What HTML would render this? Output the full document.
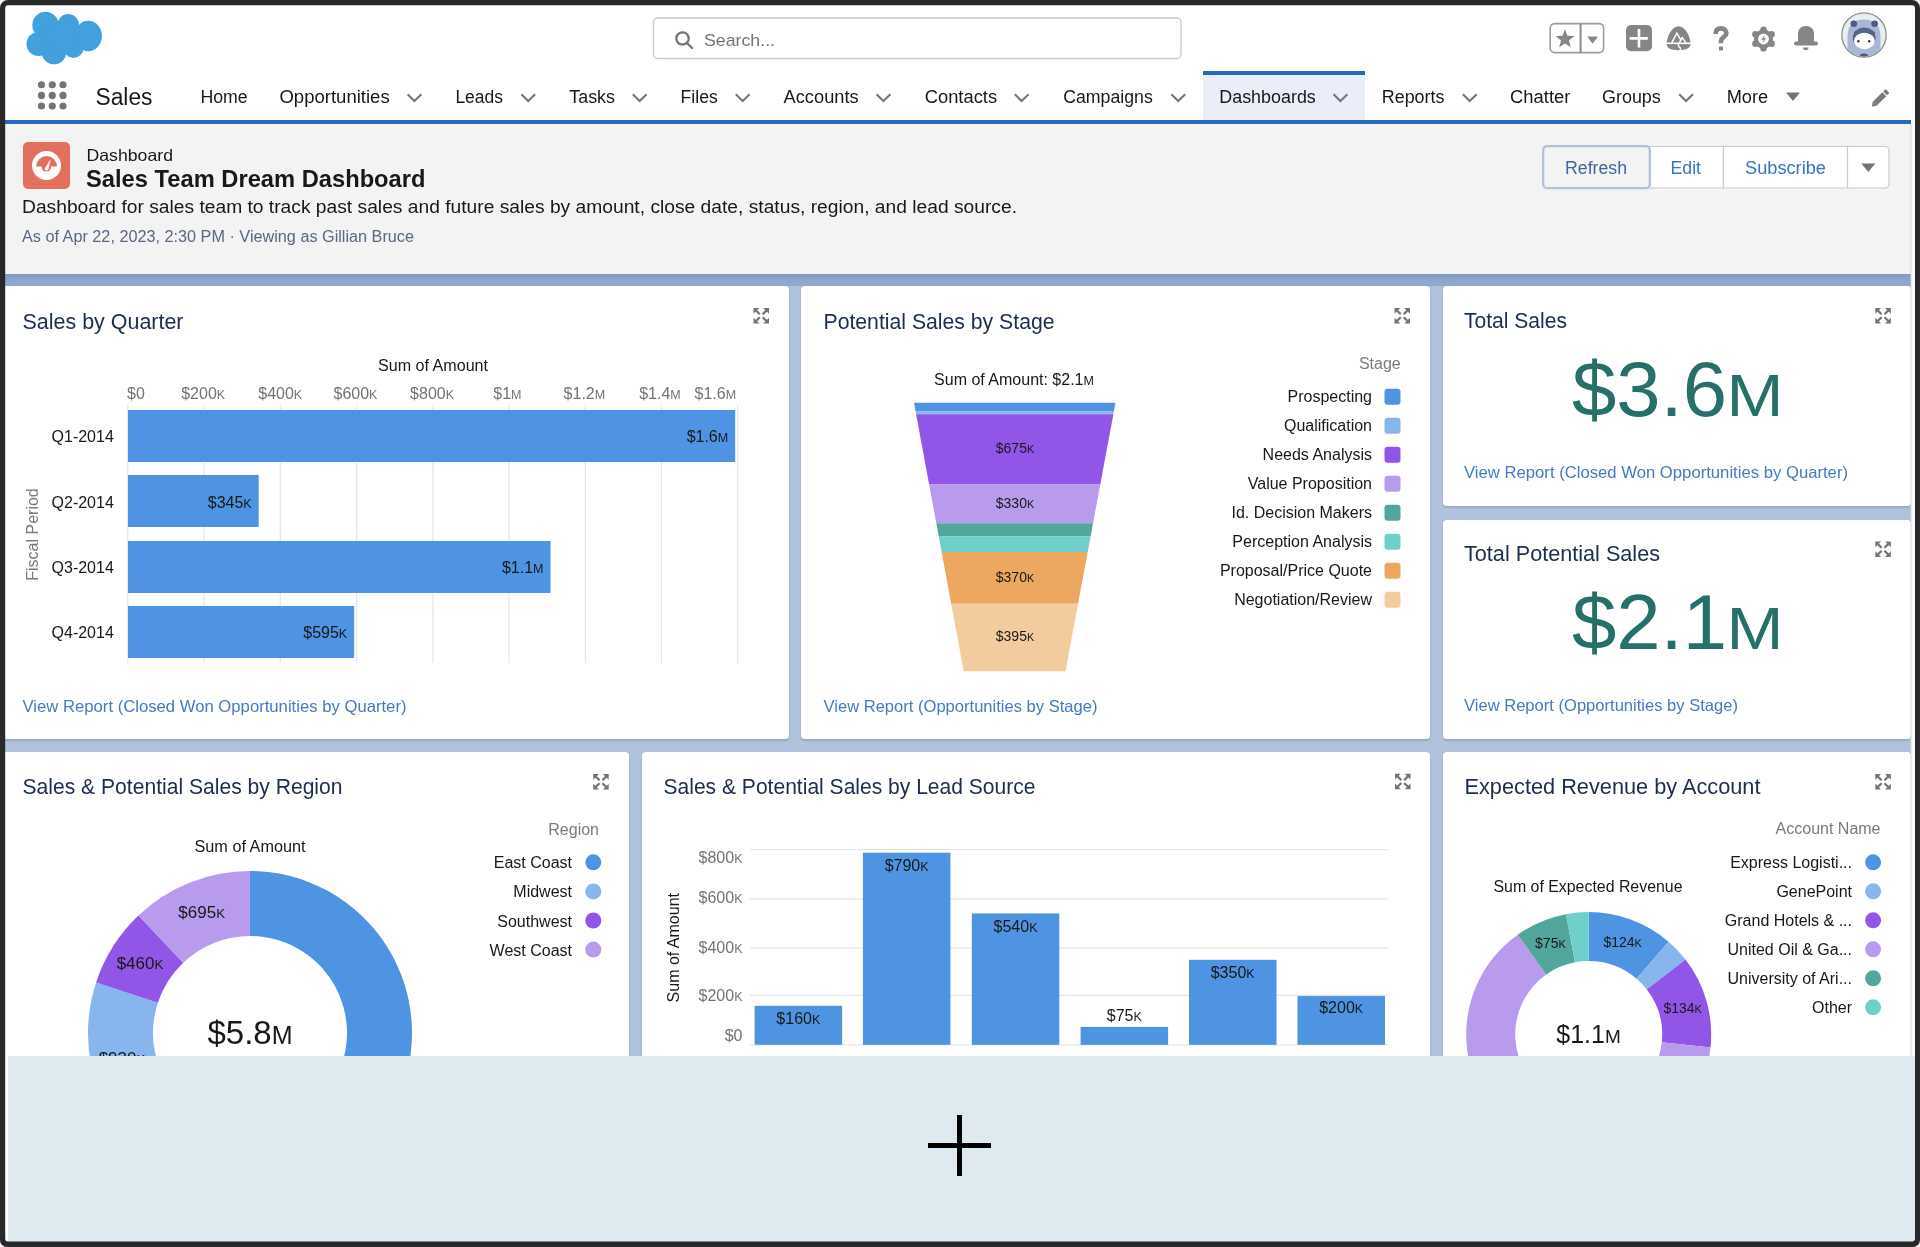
<!DOCTYPE html>
<html><head><meta charset="utf-8"><title>Sales Team Dream Dashboard</title>
<style>html,body{margin:0;padding:0;background:#fff;overflow:hidden}svg{display:block;will-change:transform}text{font-family:"Liberation Sans", sans-serif}</style>
</head><body>
<svg width="1920" height="1247" viewBox="0 0 1920 1247" font-family='"Liberation Sans", sans-serif'>
<rect x="0" y="0" width="1920" height="1247" fill="#ffffff"/>
<rect x="0" y="124" width="1920" height="150" fill="#f3f3f3"/>
<defs><linearGradient id="band" x1="0" y1="0" x2="0" y2="1"><stop offset="0" stop-color="#7d96be"/><stop offset="0.25" stop-color="#8aa2c9"/><stop offset="1" stop-color="#93aad0"/></linearGradient><filter id="sh" x="-5%" y="-5%" width="110%" height="110%"><feDropShadow dx="0" dy="1.5" stdDeviation="1" flood-color="#000" flood-opacity="0.18"/></filter></defs>
<rect x="0" y="274" width="1920" height="12" fill="url(#band)"/>
<rect x="0" y="286" width="1920" height="961" fill="#b1c2dc"/>
<rect x="0" y="0" width="1920" height="120" fill="#ffffff"/>
<rect x="0" y="120" width="1920" height="4" fill="#2a67c1"/>
<rect x="1203" y="75" width="162" height="45" fill="#e9eef8"/>
<rect x="1203" y="71" width="162" height="4" fill="#2a67c1"/>
<rect x="-5" y="286" width="794" height="453" fill="#ffffff" rx="4" filter="url(#sh)"/>
<rect x="801" y="286" width="629" height="453" fill="#ffffff" rx="4" filter="url(#sh)"/>
<rect x="1443" y="286" width="468" height="220" fill="#ffffff" rx="4" filter="url(#sh)"/>
<rect x="1443" y="520" width="468" height="219" fill="#ffffff" rx="4" filter="url(#sh)"/>
<rect x="-5" y="752" width="634" height="400" fill="#ffffff" rx="4" filter="url(#sh)"/>
<rect x="642" y="752" width="788" height="400" fill="#ffffff" rx="4" filter="url(#sh)"/>
<rect x="1443" y="752" width="468" height="400" fill="#ffffff" rx="4" filter="url(#sh)"/>
<g fill="#42a0dd"><circle cx="45.5" cy="25" r="13.2"/><circle cx="68.2" cy="24.8" r="10.8"/><circle cx="38.5" cy="44" r="12"/><circle cx="54" cy="52" r="12.3"/><circle cx="73.5" cy="48" r="10"/><circle cx="62" cy="38" r="16"/><ellipse cx="88.3" cy="36" rx="13.6" ry="15.2"/></g>
<rect x="653.5" y="18" width="527.5" height="40.5" fill="#ffffff" rx="4" stroke="#c9c9c9" stroke-width="1.3"/>
<g stroke="#747474" stroke-width="2.3" fill="none"><circle cx="682.5" cy="38.5" r="6.2"/><path d="M687 43 L692 48" stroke-linecap="round"/></g>
<text x="704" y="45.8" font-size="17" fill="#747474" textLength="71" lengthAdjust="spacingAndGlyphs">Search...</text>
<rect x="1550.2" y="23.6" width="53.4" height="29" fill="#ffffff" rx="4.5" stroke="#9c9c9c" stroke-width="1.6"/>
<line x1="1580.6" y1="23.6" x2="1580.6" y2="52.6" stroke="#8c8c8c" stroke-width="2"/>
<polygon points="1565.00,29.20 1567.47,35.80 1574.51,36.11 1568.99,40.50 1570.88,47.29 1565.00,43.40 1559.12,47.29 1561.01,40.50 1555.49,36.11 1562.53,35.80" fill="#868686"/>
<polygon points="1587.2,36.6 1598.1,36.6 1592.6,43.8" fill="#868686"/>
<rect x="1626" y="25" width="26" height="26.3" fill="#868686" rx="5"/>
<path d="M1639 29 V47.5 M1629.7 38.4 H1647.8" stroke="#fff" stroke-width="2.6"/>
<path d="M1678.6 26.2 C1672 26.2 1666.6 37 1666.6 44 C1666.6 48.5 1672 50.2 1678.6 50.2 C1685.2 50.2 1690.6 48.5 1690.6 44 C1690.6 37 1685.2 26.2 1678.6 26.2 Z" fill="#868686"/>
<path d="M1671.8 42.6 L1676.9 33.2 L1680.6 39.6 M1679.4 42.6 L1682.2 37.6 L1685.8 42.6" stroke="#fff" stroke-width="1.5" fill="none" stroke-linejoin="miter"/><path d="M1666 43.3 H1691" stroke="#fff" stroke-width="1.6"/><path d="M1678.8 43.3 C1677.6 45.5 1678.8 47 1680.4 47.8 L1680.4 51" stroke="#fff" stroke-width="1.4" fill="none"/>
<path d="M1715.6 34 C1715.6 29.6 1718 28.4 1721 28.4 C1724.2 28.4 1726.4 30.4 1726.4 33.2 C1726.4 36.4 1721 37.4 1721 41 V43.2" stroke="#868686" stroke-width="4.6" fill="none"/>
<rect x="1719" y="46.6" width="4" height="4" fill="#868686" rx="0.5"/>
<g fill="#868686"><circle cx="1763.50" cy="29.60" r="3.2"/><circle cx="1771.64" cy="34.30" r="3.2"/><circle cx="1771.64" cy="43.70" r="3.2"/><circle cx="1763.50" cy="48.40" r="3.2"/><circle cx="1755.36" cy="43.70" r="3.2"/><circle cx="1755.36" cy="34.30" r="3.2"/><circle cx="1763.5" cy="39" r="9.6"/></g>
<circle cx="1763.5" cy="39" r="5.4" fill="#fff"/><path d="M1765 34.6 L1761.2 39.8 H1763.6 L1762 43.6 L1766.2 38.2 H1763.6 Z" fill="#868686"/>
<path d="M1798 42 V34 C1798 29 1801.4 26 1806 26 C1810.6 26 1814 29 1814 34 V42 Z" fill="#868686"/><rect x="1794" y="41.6" width="24" height="4" rx="2" fill="#868686"/><path d="M1803 47.5 H1808.5 A2.75 2.75 0 0 1 1803 47.5 Z" fill="#868686"/>
<circle cx="1864" cy="35" r="22.2" fill="#e9eef0" stroke="#8e8e8e" stroke-width="1.3"/>
<defs><clipPath id="av"><circle cx="1864" cy="35" r="21.5"/></clipPath></defs>
<g clip-path="url(#av)"><path d="M1847.5 60 V36 C1847.5 25 1854 19.5 1864 19.5 C1874 19.5 1880.5 25 1880.5 36 V60 Z" fill="#a9b7d4"/><circle cx="1853.8" cy="23.8" r="3.3" fill="#4b5b81"/><circle cx="1874.6" cy="23.8" r="3.3" fill="#4b5b81"/><ellipse cx="1864.2" cy="38" rx="11.4" ry="10.5" fill="#55648a"/><ellipse cx="1864.4" cy="41" rx="10.4" ry="8.2" fill="#ffffff"/><path d="M1854 36 C1857 33 1862 34 1864 31.5 C1866 34 1872 33 1875 36.5 L1875 32 C1870 28 1858 28 1854 32 Z" fill="#55648a"/><circle cx="1858.4" cy="41.2" r="1.2" fill="#333"/><circle cx="1869.2" cy="41.2" r="1.2" fill="#333"/><ellipse cx="1864" cy="57" rx="4.5" ry="3.5" fill="#4b5b81"/></g>
<circle cx="41.5" cy="84.75" r="3.6" fill="#747474"/>
<circle cx="41.5" cy="95.4" r="3.6" fill="#747474"/>
<circle cx="41.5" cy="106" r="3.6" fill="#747474"/>
<circle cx="52.25" cy="84.75" r="3.6" fill="#747474"/>
<circle cx="52.25" cy="95.4" r="3.6" fill="#747474"/>
<circle cx="52.25" cy="106" r="3.6" fill="#747474"/>
<circle cx="63" cy="84.75" r="3.6" fill="#747474"/>
<circle cx="63" cy="95.4" r="3.6" fill="#747474"/>
<circle cx="63" cy="106" r="3.6" fill="#747474"/>
<text x="95.5" y="104.75" font-size="23" fill="#181818" textLength="57" lengthAdjust="spacingAndGlyphs">Sales</text>
<text x="200.45" y="102.7" font-size="17.5" fill="#181818" textLength="47.3" lengthAdjust="spacingAndGlyphs">Home</text>
<text x="279.4" y="102.7" font-size="17.5" fill="#181818" textLength="110.3" lengthAdjust="spacingAndGlyphs">Opportunities</text>
<text x="455.4" y="102.7" font-size="17.5" fill="#181818" textLength="47.6" lengthAdjust="spacingAndGlyphs">Leads</text>
<text x="569.3000000000001" y="102.7" font-size="17.5" fill="#181818" textLength="45.7" lengthAdjust="spacingAndGlyphs">Tasks</text>
<text x="680.6" y="102.7" font-size="17.5" fill="#181818" textLength="37.2" lengthAdjust="spacingAndGlyphs">Files</text>
<text x="783.6" y="102.7" font-size="17.5" fill="#181818" textLength="75.0" lengthAdjust="spacingAndGlyphs">Accounts</text>
<text x="924.7" y="102.7" font-size="17.5" fill="#181818" textLength="72.4" lengthAdjust="spacingAndGlyphs">Contacts</text>
<text x="1063.2" y="102.7" font-size="17.5" fill="#181818" textLength="89.6" lengthAdjust="spacingAndGlyphs">Campaigns</text>
<text x="1219.3" y="102.7" font-size="17.5" fill="#181818" textLength="96.5" lengthAdjust="spacingAndGlyphs">Dashboards</text>
<text x="1381.8" y="102.7" font-size="17.5" fill="#181818" textLength="62.6" lengthAdjust="spacingAndGlyphs">Reports</text>
<text x="1510.1000000000001" y="102.7" font-size="17.5" fill="#181818" textLength="60.3" lengthAdjust="spacingAndGlyphs">Chatter</text>
<text x="1602.0" y="102.7" font-size="17.5" fill="#181818" textLength="58.8" lengthAdjust="spacingAndGlyphs">Groups</text>
<text x="1726.7" y="102.7" font-size="17.5" fill="#181818" textLength="41.4" lengthAdjust="spacingAndGlyphs">More</text>
<path d="M407.6 94.3 L414.40000000000003 101 L421.40000000000003 94.3" stroke="#747474" stroke-width="2" fill="none"/>
<path d="M521.4 94.3 L528.2 101 L535.2 94.3" stroke="#747474" stroke-width="2" fill="none"/>
<path d="M632.8 94.3 L639.6 101 L646.6 94.3" stroke="#747474" stroke-width="2" fill="none"/>
<path d="M735.8 94.3 L742.6 101 L749.6 94.3" stroke="#747474" stroke-width="2" fill="none"/>
<path d="M876.5999999999999 94.3 L883.4 101 L890.4 94.3" stroke="#747474" stroke-width="2" fill="none"/>
<path d="M1014.8 94.3 L1021.6 101 L1028.6 94.3" stroke="#747474" stroke-width="2" fill="none"/>
<path d="M1171.3999999999999 94.3 L1178.1999999999998 101 L1185.1999999999998 94.3" stroke="#747474" stroke-width="2" fill="none"/>
<path d="M1333.6 94.3 L1340.3999999999999 101 L1347.3999999999999 94.3" stroke="#747474" stroke-width="2" fill="none"/>
<path d="M1462.8999999999999 94.3 L1469.6999999999998 101 L1476.6999999999998 94.3" stroke="#747474" stroke-width="2" fill="none"/>
<path d="M1679.2 94.3 L1686.0 101 L1693.0 94.3" stroke="#747474" stroke-width="2" fill="none"/>
<polygon points="1786,92.5 1800,92.5 1793,101" fill="#747474"/>
<g transform="rotate(-45 1879.8 98.7)"><rect x="1872.3" y="96" width="13.8" height="5.4" fill="#7a7a7a"/><polygon points="1868.6,98.7 1872.3,96 1872.3,101.4" fill="#7a7a7a"/><rect x="1887.2" y="96" width="3.6" height="5.4" rx="1.2" fill="#7a7a7a"/></g>
<rect x="23" y="142" width="47" height="47" fill="#e3705f" rx="5"/>
<circle cx="46.5" cy="165.5" r="14.5" fill="#fff"/>
<path d="M36.2 166.5 A10.4 10.4 0 0 1 57 166.5 Z" fill="#e3705f"/><circle cx="46.3" cy="166.8" r="4.8" fill="#e3705f"/>
<path d="M44.6 168.6 L50.8 159 L48.3 169.6 A2 2 0 0 1 44.6 168.6 Z" fill="#fff"/>
<text x="86.5" y="160.6" font-size="16.5" fill="#181818" textLength="86.5" lengthAdjust="spacingAndGlyphs">Dashboard</text>
<text x="86" y="186.9" font-size="24" fill="#181818" font-weight="bold" textLength="339.5" lengthAdjust="spacingAndGlyphs">Sales Team Dream Dashboard</text>
<text x="22" y="212.6" font-size="17.5" fill="#181818" textLength="995" lengthAdjust="spacingAndGlyphs">Dashboard for sales team to track past sales and future sales by amount, close date, status, region, and lead source.</text>
<text x="22" y="241.8" font-size="16" fill="#586884" textLength="392" lengthAdjust="spacingAndGlyphs">As of Apr 22, 2023, 2:30 PM · Viewing as Gillian Bruce</text>
<rect x="1543" y="146.5" width="346" height="41.5" fill="#ffffff" rx="4" stroke="#c9c9c9" stroke-width="1.2"/>
<rect x="1543.2" y="146.2" width="106.6" height="42" fill="#f3f3f3" rx="4" stroke="#b2c0d8" stroke-width="2.2"/>
<line x1="1723.3" y1="146.5" x2="1723.3" y2="188" stroke="#c9c9c9" stroke-width="1.2"/>
<line x1="1847.5" y1="146.5" x2="1847.5" y2="188" stroke="#c9c9c9" stroke-width="1.2"/>
<text x="1565" y="174.25" font-size="17.5" fill="#45669c" textLength="62" lengthAdjust="spacingAndGlyphs">Refresh</text>
<text x="1670.5" y="174.25" font-size="17.5" fill="#3475c8" textLength="30.5" lengthAdjust="spacingAndGlyphs">Edit</text>
<text x="1745" y="174.25" font-size="17.5" fill="#3475c8" textLength="81" lengthAdjust="spacingAndGlyphs">Subscribe</text>
<polygon points="1861.3,163.5 1875.3,163.5 1868.3,172" fill="#747474"/>
<text x="22.5" y="328.5" font-size="21.5" fill="#1b2d50" textLength="161" lengthAdjust="spacingAndGlyphs">Sales by Quarter</text>
<polygon points="753.5,308.0 759.3,308.0 753.5,313.8" fill="#747474"/><line x1="756.0" y1="310.5" x2="759.8" y2="314.3" stroke="#747474" stroke-width="2.3"/><polygon points="769.0,308.0 763.2,308.0 769.0,313.8" fill="#747474"/><line x1="766.5" y1="310.5" x2="762.7" y2="314.3" stroke="#747474" stroke-width="2.3"/><polygon points="753.5,323.5 759.3,323.5 753.5,317.7" fill="#747474"/><line x1="756.0" y1="321.0" x2="759.8" y2="317.2" stroke="#747474" stroke-width="2.3"/><polygon points="769.0,323.5 763.2,323.5 769.0,317.7" fill="#747474"/><line x1="766.5" y1="321.0" x2="762.7" y2="317.2" stroke="#747474" stroke-width="2.3"/>
<text x="433" y="371" font-size="16" fill="#181818" text-anchor="middle" textLength="110" lengthAdjust="spacingAndGlyphs">Sum of Amount</text>
<line x1="127.8" y1="405" x2="127.8" y2="663" stroke="#e5e5e5" stroke-width="1.2"/>
<line x1="204.1" y1="405" x2="204.1" y2="663" stroke="#e5e5e5" stroke-width="1.2"/>
<line x1="280.3" y1="405" x2="280.3" y2="663" stroke="#e5e5e5" stroke-width="1.2"/>
<line x1="356.6" y1="405" x2="356.6" y2="663" stroke="#e5e5e5" stroke-width="1.2"/>
<line x1="432.8" y1="405" x2="432.8" y2="663" stroke="#e5e5e5" stroke-width="1.2"/>
<line x1="509.1" y1="405" x2="509.1" y2="663" stroke="#e5e5e5" stroke-width="1.2"/>
<line x1="585.3" y1="405" x2="585.3" y2="663" stroke="#e5e5e5" stroke-width="1.2"/>
<line x1="661.5" y1="405" x2="661.5" y2="663" stroke="#e5e5e5" stroke-width="1.2"/>
<line x1="737.8" y1="405" x2="737.8" y2="663" stroke="#e5e5e5" stroke-width="1.2"/>
<text x="127.0" y="398.8" font-size="16" fill="#737373">$0</text>
<text x="181.2" y="398.8" font-size="16" fill="#737373">$200<tspan font-size="12.5">K</tspan></text>
<text x="258.25" y="398.8" font-size="16" fill="#737373">$400<tspan font-size="12.5">K</tspan></text>
<text x="333.5" y="398.8" font-size="16" fill="#737373">$600<tspan font-size="12.5">K</tspan></text>
<text x="410.1" y="398.8" font-size="16" fill="#737373">$800<tspan font-size="12.5">K</tspan></text>
<text x="493.3" y="398.8" font-size="16" fill="#737373">$1<tspan font-size="12.5">M</tspan></text>
<text x="563.6" y="398.8" font-size="16" fill="#737373">$1.2<tspan font-size="12.5">M</tspan></text>
<text x="639.2" y="398.8" font-size="16" fill="#737373">$1.4<tspan font-size="12.5">M</tspan></text>
<text x="694.5" y="398.8" font-size="16" fill="#737373">$1.6<tspan font-size="12.5">M</tspan></text>
<rect x="128" y="410" width="607.2" height="52" fill="#4f94e2"/>
<text x="113.8" y="441.5" font-size="16" fill="#181818" text-anchor="end">Q1-2014</text>
<text x="728.2" y="441.5" font-size="16" fill="#181818" text-anchor="end">$1.6<tspan font-size="12.5">M</tspan></text>
<rect x="128" y="475" width="130.7" height="52" fill="#4f94e2"/>
<text x="113.8" y="508.2" font-size="16" fill="#181818" text-anchor="end">Q2-2014</text>
<text x="251.7" y="508.2" font-size="16" fill="#181818" text-anchor="end">$345<tspan font-size="12.5">K</tspan></text>
<rect x="128" y="541" width="422.5" height="52" fill="#4f94e2"/>
<text x="113.8" y="572.9" font-size="16" fill="#181818" text-anchor="end">Q3-2014</text>
<text x="543.5" y="572.9" font-size="16" fill="#181818" text-anchor="end">$1.1<tspan font-size="12.5">M</tspan></text>
<rect x="128" y="606" width="226.2" height="52" fill="#4f94e2"/>
<text x="113.8" y="638.4" font-size="16" fill="#181818" text-anchor="end">Q4-2014</text>
<text x="347.2" y="638.4" font-size="16" fill="#181818" text-anchor="end">$595<tspan font-size="12.5">K</tspan></text>
<text x="0" y="0" font-size="16" fill="#7a7a7a" text-anchor="middle" transform="translate(37.6 534.5) rotate(-90)">Fiscal Period</text>
<text x="22.5" y="711.9" font-size="16.5" fill="#447ac4" textLength="384" lengthAdjust="spacingAndGlyphs">View Report (Closed Won Opportunities by Quarter)</text>
<text x="823.5" y="329.4" font-size="21.5" fill="#1b2d50" textLength="231" lengthAdjust="spacingAndGlyphs">Potential Sales by Stage</text>
<polygon points="1394.5,308.0 1400.3,308.0 1394.5,313.8" fill="#747474"/><line x1="1397.0" y1="310.5" x2="1400.8" y2="314.3" stroke="#747474" stroke-width="2.3"/><polygon points="1410.0,308.0 1404.2,308.0 1410.0,313.8" fill="#747474"/><line x1="1407.5" y1="310.5" x2="1403.7" y2="314.3" stroke="#747474" stroke-width="2.3"/><polygon points="1394.5,323.5 1400.3,323.5 1394.5,317.7" fill="#747474"/><line x1="1397.0" y1="321.0" x2="1400.8" y2="317.2" stroke="#747474" stroke-width="2.3"/><polygon points="1410.0,323.5 1404.2,323.5 1410.0,317.7" fill="#747474"/><line x1="1407.5" y1="321.0" x2="1403.7" y2="317.2" stroke="#747474" stroke-width="2.3"/>
<text x="1014" y="385.3" font-size="16" fill="#181818" text-anchor="middle">Sum of Amount: $2.1<tspan font-size="12.5">M</tspan></text>
<polygon points="914.00,402.7 1115.50,402.7 1113.84,411.6 915.65,411.6" fill="#4f94e2"/>
<polygon points="915.65,411.6 1113.84,411.6 1113.36,414.2 916.13,414.2" fill="#88b5ed"/>
<polygon points="916.13,414.2 1113.36,414.2 1100.27,484.5 929.14,484.5" fill="#9155e8"/>
<polygon points="929.14,484.5 1100.27,484.5 1093.04,523.3 936.32,523.3" fill="#b99bee"/>
<polygon points="936.32,523.3 1093.04,523.3 1090.58,536.5 938.77,536.5" fill="#52a69c"/>
<polygon points="938.77,536.5 1090.58,536.5 1087.72,551.9 941.62,551.9" fill="#6fcfca"/>
<polygon points="941.62,551.9 1087.72,551.9 1078.05,603.8 951.22,603.8" fill="#eca760"/>
<polygon points="951.22,603.8 1078.05,603.8 1065.50,671.2 963.70,671.2" fill="#f2cc9f"/>
<text x="1015" y="453.3" font-size="14" fill="#181818" text-anchor="middle">$675<tspan font-size="10.9">K</tspan></text>
<text x="1015" y="507.5" font-size="14" fill="#181818" text-anchor="middle">$330<tspan font-size="10.9">K</tspan></text>
<text x="1015" y="581.5" font-size="14" fill="#181818" text-anchor="middle">$370<tspan font-size="10.9">K</tspan></text>
<text x="1015" y="640.6" font-size="14" fill="#181818" text-anchor="middle">$395<tspan font-size="10.9">K</tspan></text>
<text x="1400.7" y="369.2" font-size="16" fill="#7a7a7a" text-anchor="end">Stage</text>
<text x="1372" y="402.3" font-size="16" fill="#181818" text-anchor="end">Prospecting</text>
<rect x="1384.5" y="388.7" width="16" height="16" fill="#4f94e2" rx="3"/>
<text x="1372" y="431.29" font-size="16" fill="#181818" text-anchor="end">Qualification</text>
<rect x="1384.5" y="417.69" width="16" height="16" fill="#88b5ed" rx="3"/>
<text x="1372" y="460.28000000000003" font-size="16" fill="#181818" text-anchor="end">Needs Analysis</text>
<rect x="1384.5" y="446.68" width="16" height="16" fill="#9155e8" rx="3"/>
<text x="1372" y="489.27" font-size="16" fill="#181818" text-anchor="end">Value Proposition</text>
<rect x="1384.5" y="475.66999999999996" width="16" height="16" fill="#b99bee" rx="3"/>
<text x="1372" y="518.26" font-size="16" fill="#181818" text-anchor="end">Id. Decision Makers</text>
<rect x="1384.5" y="504.65999999999997" width="16" height="16" fill="#52a69c" rx="3"/>
<text x="1372" y="547.25" font-size="16" fill="#181818" text-anchor="end">Perception Analysis</text>
<rect x="1384.5" y="533.65" width="16" height="16" fill="#6fcfca" rx="3"/>
<text x="1372" y="576.24" font-size="16" fill="#181818" text-anchor="end">Proposal/Price Quote</text>
<rect x="1384.5" y="562.64" width="16" height="16" fill="#eca760" rx="3"/>
<text x="1372" y="605.23" font-size="16" fill="#181818" text-anchor="end">Negotiation/Review</text>
<rect x="1384.5" y="591.63" width="16" height="16" fill="#f2cc9f" rx="3"/>
<text x="823.5" y="711.9" font-size="16.5" fill="#447ac4" textLength="274" lengthAdjust="spacingAndGlyphs">View Report (Opportunities by Stage)</text>
<text x="1464" y="328" font-size="21.5" fill="#1b2d50" textLength="103" lengthAdjust="spacingAndGlyphs">Total Sales</text>
<polygon points="1875.3,308.0 1881.1,308.0 1875.3,313.8" fill="#747474"/><line x1="1877.8" y1="310.5" x2="1881.6" y2="314.3" stroke="#747474" stroke-width="2.3"/><polygon points="1890.8,308.0 1885.0,308.0 1890.8,313.8" fill="#747474"/><line x1="1888.3" y1="310.5" x2="1884.5" y2="314.3" stroke="#747474" stroke-width="2.3"/><polygon points="1875.3,323.5 1881.1,323.5 1875.3,317.7" fill="#747474"/><line x1="1877.8" y1="321.0" x2="1881.6" y2="317.2" stroke="#747474" stroke-width="2.3"/><polygon points="1890.8,323.5 1885.0,323.5 1890.8,317.7" fill="#747474"/><line x1="1888.3" y1="321.0" x2="1884.5" y2="317.2" stroke="#747474" stroke-width="2.3"/>
<text x="1572" y="416.3" font-size="78" fill="#27706a" textLength="155" lengthAdjust="spacingAndGlyphs">$3.6</text>
<text x="1726.5" y="416.3" font-size="60" fill="#27706a" textLength="57" lengthAdjust="spacingAndGlyphs">M</text>
<text x="1464" y="477.8" font-size="16.5" fill="#447ac4" textLength="384" lengthAdjust="spacingAndGlyphs">View Report (Closed Won Opportunities by Quarter)</text>
<text x="1464" y="561.25" font-size="21.5" fill="#1b2d50" textLength="196" lengthAdjust="spacingAndGlyphs">Total Potential Sales</text>
<polygon points="1875.3,541.5 1881.1,541.5 1875.3,547.3" fill="#747474"/><line x1="1877.8" y1="544.0" x2="1881.6" y2="547.8" stroke="#747474" stroke-width="2.3"/><polygon points="1890.8,541.5 1885.0,541.5 1890.8,547.3" fill="#747474"/><line x1="1888.3" y1="544.0" x2="1884.5" y2="547.8" stroke="#747474" stroke-width="2.3"/><polygon points="1875.3,557.0 1881.1,557.0 1875.3,551.2" fill="#747474"/><line x1="1877.8" y1="554.5" x2="1881.6" y2="550.7" stroke="#747474" stroke-width="2.3"/><polygon points="1890.8,557.0 1885.0,557.0 1890.8,551.2" fill="#747474"/><line x1="1888.3" y1="554.5" x2="1884.5" y2="550.7" stroke="#747474" stroke-width="2.3"/>
<text x="1572" y="649.1" font-size="78" fill="#27706a" textLength="155" lengthAdjust="spacingAndGlyphs">$2.1</text>
<text x="1726.5" y="649.1" font-size="60" fill="#27706a" textLength="57" lengthAdjust="spacingAndGlyphs">M</text>
<text x="1464" y="711.3" font-size="16.5" fill="#447ac4" textLength="274" lengthAdjust="spacingAndGlyphs">View Report (Opportunities by Stage)</text>
<text x="22.5" y="794.3" font-size="21.5" fill="#1b2d50" textLength="320" lengthAdjust="spacingAndGlyphs">Sales &amp; Potential Sales by Region</text>
<polygon points="593.2,774.0 599.0,774.0 593.2,779.8" fill="#747474"/><line x1="595.7" y1="776.5" x2="599.5" y2="780.3" stroke="#747474" stroke-width="2.3"/><polygon points="608.7,774.0 602.9000000000001,774.0 608.7,779.8" fill="#747474"/><line x1="606.2" y1="776.5" x2="602.4000000000001" y2="780.3" stroke="#747474" stroke-width="2.3"/><polygon points="593.2,789.5 599.0,789.5 593.2,783.7" fill="#747474"/><line x1="595.7" y1="787.0" x2="599.5" y2="783.2" stroke="#747474" stroke-width="2.3"/><polygon points="608.7,789.5 602.9000000000001,789.5 608.7,783.7" fill="#747474"/><line x1="606.2" y1="787.0" x2="602.4000000000001" y2="783.2" stroke="#747474" stroke-width="2.3"/>
<text x="599" y="835" font-size="16" fill="#7a7a7a" text-anchor="end">Region</text>
<text x="572" y="868.3" font-size="16" fill="#181818" text-anchor="end">East Coast</text>
<circle cx="593.3" cy="862.3" r="8" fill="#4f94e2"/>
<text x="572" y="897.4" font-size="16" fill="#181818" text-anchor="end">Midwest</text>
<circle cx="593.3" cy="891.4" r="8" fill="#88b5ed"/>
<text x="572" y="926.5" font-size="16" fill="#181818" text-anchor="end">Southwest</text>
<circle cx="593.3" cy="920.5" r="8" fill="#9155e8"/>
<text x="572" y="955.5999999999999" font-size="16" fill="#181818" text-anchor="end">West Coast</text>
<circle cx="593.3" cy="949.6" r="8" fill="#b99bee"/>
<text x="250" y="851.7" font-size="16" fill="#181818" text-anchor="middle" textLength="111" lengthAdjust="spacingAndGlyphs">Sum of Amount</text>
<path d="M250.00 871.00 A162 162 0 1 1 124.82 1135.83 L175.04 1094.57 A97 97 0 1 0 250.00 936.00 Z" fill="#4f94e2"/>
<path d="M124.82 1135.83 A162 162 0 0 1 96.10 982.40 L157.85 1002.70 A97 97 0 0 0 175.04 1094.57 Z" fill="#88b5ed"/>
<path d="M96.10 982.40 A162 162 0 0 1 138.49 915.49 L183.23 962.64 A97 97 0 0 0 157.85 1002.70 Z" fill="#9155e8"/>
<path d="M138.49 915.49 A162 162 0 0 1 250.00 871.00 L250.00 936.00 A97 97 0 0 0 183.23 962.64 Z" fill="#b99bee"/>
<text x="201.7" y="917.7" font-size="17" fill="#181818" text-anchor="middle">$695<tspan font-size="13.3">K</tspan></text>
<text x="140" y="969.3" font-size="17" fill="#181818" text-anchor="middle">$460<tspan font-size="13.3">K</tspan></text>
<text x="122" y="1064" font-size="17" fill="#181818" text-anchor="middle">$930<tspan font-size="13.3">K</tspan></text>
<text x="250" y="1044" font-size="33" fill="#181818" text-anchor="middle">$5.8<tspan font-size="25">M</tspan></text>
<text x="663.5" y="794" font-size="21.5" fill="#1b2d50" textLength="372" lengthAdjust="spacingAndGlyphs">Sales &amp; Potential Sales by Lead Source</text>
<polygon points="1395.0,773.8 1400.8,773.8 1395.0,779.5999999999999" fill="#747474"/><line x1="1397.5" y1="776.3" x2="1401.3" y2="780.0999999999999" stroke="#747474" stroke-width="2.3"/><polygon points="1410.5,773.8 1404.7,773.8 1410.5,779.5999999999999" fill="#747474"/><line x1="1408.0" y1="776.3" x2="1404.2" y2="780.0999999999999" stroke="#747474" stroke-width="2.3"/><polygon points="1395.0,789.3 1400.8,789.3 1395.0,783.5" fill="#747474"/><line x1="1397.5" y1="786.8" x2="1401.3" y2="783.0" stroke="#747474" stroke-width="2.3"/><polygon points="1410.5,789.3 1404.7,789.3 1410.5,783.5" fill="#747474"/><line x1="1408.0" y1="786.8" x2="1404.2" y2="783.0" stroke="#747474" stroke-width="2.3"/>
<line x1="750" y1="849.6" x2="1388" y2="849.6" stroke="#e5e5e5" stroke-width="1.3"/>
<line x1="750" y1="898.9" x2="1388" y2="898.9" stroke="#e5e5e5" stroke-width="1.3"/>
<line x1="750" y1="947.8" x2="1388" y2="947.8" stroke="#e5e5e5" stroke-width="1.3"/>
<line x1="750" y1="995.3" x2="1388" y2="995.3" stroke="#e5e5e5" stroke-width="1.3"/>
<line x1="750" y1="1044.8" x2="1388" y2="1044.8" stroke="#e5e5e5" stroke-width="1.3"/>
<text x="742.5" y="862.6" font-size="16" fill="#737373" text-anchor="end">$800<tspan font-size="12.5">K</tspan></text>
<text x="742.5" y="903.4" font-size="16" fill="#737373" text-anchor="end">$600<tspan font-size="12.5">K</tspan></text>
<text x="742.5" y="952.9" font-size="16" fill="#737373" text-anchor="end">$400<tspan font-size="12.5">K</tspan></text>
<text x="742.5" y="1001.3" font-size="16" fill="#737373" text-anchor="end">$200<tspan font-size="12.5">K</tspan></text>
<text x="742.5" y="1041.1" font-size="16" fill="#737373" text-anchor="end">$0</text>
<text x="0" y="0" font-size="16" fill="#181818" text-anchor="middle" transform="translate(678.5 947.7) rotate(-90)">Sum of Amount</text>
<rect x="754.6" y="1005.8" width="87.5" height="39.0" fill="#4f94e2"/>
<text x="798.3000000000001" y="1023.9" font-size="16" fill="#181818" text-anchor="middle">$160<tspan font-size="12.5">K</tspan></text>
<rect x="862.9" y="852.7" width="87.5" height="192.0999999999999" fill="#4f94e2"/>
<text x="906.6" y="870.8" font-size="16" fill="#181818" text-anchor="middle">$790<tspan font-size="12.5">K</tspan></text>
<rect x="971.8" y="913.4" width="87.5" height="131.39999999999998" fill="#4f94e2"/>
<text x="1015.5" y="932" font-size="16" fill="#181818" text-anchor="middle">$540<tspan font-size="12.5">K</tspan></text>
<rect x="1080.6" y="1026.9" width="87.5" height="17.899999999999864" fill="#4f94e2"/>
<text x="1124.3" y="1020.6" font-size="16" fill="#181818" text-anchor="middle">$75<tspan font-size="12.5">K</tspan></text>
<rect x="1189" y="959.8" width="87.5" height="85.0" fill="#4f94e2"/>
<text x="1232.7" y="977.5" font-size="16" fill="#181818" text-anchor="middle">$350<tspan font-size="12.5">K</tspan></text>
<rect x="1297.5" y="996.1" width="87.5" height="48.69999999999993" fill="#4f94e2"/>
<text x="1341.2" y="1013.4" font-size="16" fill="#181818" text-anchor="middle">$200<tspan font-size="12.5">K</tspan></text>
<text x="1464.5" y="794.2" font-size="21.5" fill="#1b2d50" textLength="296" lengthAdjust="spacingAndGlyphs">Expected Revenue by Account</text>
<polygon points="1875.3,774.0 1881.1,774.0 1875.3,779.8" fill="#747474"/><line x1="1877.8" y1="776.5" x2="1881.6" y2="780.3" stroke="#747474" stroke-width="2.3"/><polygon points="1890.8,774.0 1885.0,774.0 1890.8,779.8" fill="#747474"/><line x1="1888.3" y1="776.5" x2="1884.5" y2="780.3" stroke="#747474" stroke-width="2.3"/><polygon points="1875.3,789.5 1881.1,789.5 1875.3,783.7" fill="#747474"/><line x1="1877.8" y1="787.0" x2="1881.6" y2="783.2" stroke="#747474" stroke-width="2.3"/><polygon points="1890.8,789.5 1885.0,789.5 1890.8,783.7" fill="#747474"/><line x1="1888.3" y1="787.0" x2="1884.5" y2="783.2" stroke="#747474" stroke-width="2.3"/>
<text x="1880.5" y="834.4" font-size="16" fill="#7a7a7a" text-anchor="end">Account Name</text>
<text x="1852" y="868.3" font-size="16" fill="#181818" text-anchor="end">Express Logisti...</text>
<circle cx="1873.1" cy="862.3" r="8" fill="#4f94e2"/>
<text x="1852" y="897.3" font-size="16" fill="#181818" text-anchor="end">GenePoint</text>
<circle cx="1873.1" cy="891.3" r="8" fill="#88b5ed"/>
<text x="1852" y="926.3" font-size="16" fill="#181818" text-anchor="end">Grand Hotels &amp; ...</text>
<circle cx="1873.1" cy="920.3" r="8" fill="#9155e8"/>
<text x="1852" y="955.3" font-size="16" fill="#181818" text-anchor="end">United Oil &amp; Ga...</text>
<circle cx="1873.1" cy="949.3" r="8" fill="#b99bee"/>
<text x="1852" y="984.3" font-size="16" fill="#181818" text-anchor="end">University of Ari...</text>
<circle cx="1873.1" cy="978.3" r="8" fill="#52a69c"/>
<text x="1852" y="1013.3" font-size="16" fill="#181818" text-anchor="end">Other</text>
<circle cx="1873.1" cy="1007.3" r="8" fill="#6fcfca"/>
<text x="1588" y="892.1" font-size="16" fill="#181818" text-anchor="middle" textLength="189" lengthAdjust="spacingAndGlyphs">Sum of Expected Revenue</text>
<path d="M1588.70 912.00 A122.5 122.5 0 0 1 1668.58 941.63 L1636.63 978.78 A73.5 73.5 0 0 0 1588.70 961.00 Z" fill="#4f94e2"/>
<path d="M1668.58 941.63 A122.5 122.5 0 0 1 1685.49 959.42 L1646.78 989.45 A73.5 73.5 0 0 0 1636.63 978.78 Z" fill="#88b5ed"/>
<path d="M1685.49 959.42 A122.5 122.5 0 0 1 1710.51 1047.52 L1661.78 1042.31 A73.5 73.5 0 0 0 1646.78 989.45 Z" fill="#9155e8"/>
<path d="M1710.51 1047.52 A122.5 122.5 0 1 1 1517.74 934.65 L1546.12 974.59 A73.5 73.5 0 1 0 1661.78 1042.31 Z" fill="#b99bee"/>
<path d="M1517.74 934.65 A122.5 122.5 0 0 1 1565.96 914.13 L1575.05 962.28 A73.5 73.5 0 0 0 1546.12 974.59 Z" fill="#52a69c"/>
<path d="M1565.96 914.13 A122.5 122.5 0 0 1 1588.70 912.00 L1588.70 961.00 A73.5 73.5 0 0 0 1575.05 962.28 Z" fill="#6fcfca"/>
<text x="1550.4" y="947.7" font-size="14" fill="#181818" text-anchor="middle">$75<tspan font-size="10.9">K</tspan></text>
<text x="1622.6" y="947.1" font-size="14" fill="#181818" text-anchor="middle">$124<tspan font-size="10.9">K</tspan></text>
<text x="1682.6" y="1012.5" font-size="14" fill="#181818" text-anchor="middle">$134<tspan font-size="10.9">K</tspan></text>
<text x="1588.5" y="1042.9" font-size="25" fill="#181818" text-anchor="middle">$1.1<tspan font-size="19">M</tspan></text>
<rect x="1911" y="0" width="9" height="1247" fill="#ffffff"/>
<rect x="1910.5" y="124" width="1" height="932" fill="#d6d6d6"/>
<rect x="5" y="1056" width="1910" height="191" fill="#ffffff"/>
<rect x="8" y="1056" width="1907" height="191" fill="#dfeaf0"/>
<path d="M959.5 1115 V1176 M928 1145.5 H991" stroke="#000" stroke-width="5"/>
<path fill="#ffffff" fill-rule="evenodd" d="M0 0 H1920 V1247 H0 Z M8 0 H1912 A8 8 0 0 1 1920 8 V1240 A7 7 0 0 1 1913 1247 H7 A7 7 0 0 1 0 1240 V8 A8 8 0 0 1 8 0 Z"/>
<path fill="#28282a" fill-rule="evenodd" d="M8 0 H1912 A8 8 0 0 1 1920 8 V1240 A7 7 0 0 1 1913 1247 H7 A7 7 0 0 1 0 1240 V8 A8 8 0 0 1 8 0 Z M8 5.2 H1912 A3 3 0 0 1 1915 8.2 V1238.5 A3 3 0 0 1 1912 1241.5 H8 A3 3 0 0 1 5.2 1238.5 V8.2 A3 3 0 0 1 8 5.2 Z"/>
</svg>
</body></html>
